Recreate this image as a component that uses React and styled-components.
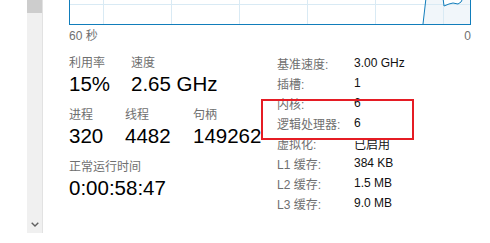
import React from "react";
import styled, { createGlobalStyle } from "styled-components";

const Global = createGlobalStyle`
  html, body { margin: 0; padding: 0; background: #fff; }
  body {
    font-family: "Liberation Sans", "Noto Sans CJK SC", sans-serif;
    overflow: hidden;
  }
`;

const Page = styled.div`
  display: flex;
  align-items: flex-start;
  width: 490px;
  height: 243px;
`;

const Scrollbar = styled.div`
  margin-left: 27px;
  width: 15px;
  height: 233px;
  background: #f0f0f0;
  border-right: 1px solid #e2e2e2;
  display: flex;
  flex-direction: column;
  justify-content: space-between;
  align-items: center;
`;

const Thumb = styled.div`
  width: 15px;
  height: 13px;
  background: #cdcdcd;
`;

const Arrow = styled.svg`
  margin-bottom: 6px;
  margin-left: 1px;
`;

const Main = styled.div`
  margin-left: 26px;
  width: 402px;
  display: flex;
  flex-direction: column;
`;

const Chart = styled.svg`
  display: block;
`;

const Axis = styled.div`
  margin-top: 3px;
  display: flex;
  justify-content: space-between;
  font-size: 12px;
  line-height: 16px;
  color: #707070;
`;

const Stats = styled.div`
  margin-top: 9px;
  display: grid;
  grid-template-columns: 208px auto;
`;

const LeftCol = styled.div`
  padding-top: 1px;
  display: flex;
  flex-direction: column;
  gap: 10px;
`;

const StatRow = styled.div`
  display: flex;
`;

const Stat = styled.div`
  width: ${(p) => p.$w || 100}px;
  display: flex;
  flex-direction: column;
  white-space: nowrap;
`;

const Label = styled.div`
  padding-top: 1px;
  font-size: 12px;
  line-height: 16px;
  color: #6f6f6f;
`;

const Value = styled.div`
  font-size: 20.5px;
  line-height: 25px;
  color: #000;
`;

const InfoTable = styled.div`
  position: relative;
  display: grid;
  grid-template-columns: 77px auto;
  grid-auto-rows: 20px;
  align-items: center;
  font-size: 12px;
  white-space: nowrap;
`;

const InfoKey = styled.div`
  color: #6f6f6f;
`;

const InfoVal = styled.div`
  color: #111;
`;

const Highlight = styled.div`
  position: absolute;
  left: -16px;
  top: 46px;
  width: 149px;
  height: 37px;
  border: 2px solid #e51c24;
`;

const info = [
  ["基准速度:", "3.00 GHz"],
  ["插槽:", "1"],
  ["内核:", "6"],
  ["逻辑处理器:", "6"],
  ["虚拟化:", "已启用"],
  ["L1 缓存:", "384 KB"],
  ["L2 缓存:", "1.5 MB"],
  ["L3 缓存:", "9.0 MB"],
];

const gridX = [34, 102, 170, 238, 306, 374];
const linePts = "354,24 357,-2 374,-2 375,6 380,4 384,3 389,4 392,2 394,-2 403,-2";

function CpuChart() {
  return (
    <Chart width="402" height="25" viewBox="0 0 402 25">
      <polygon points={`${linePts} 403,24`} fill="#f1f6fa" />
      {gridX.map((x) => (
        <line key={x} x1={x + 0.5} y1="0" x2={x + 0.5} y2="24" stroke="#d9eaf4" />
      ))}
      <line x1="0" y1="4.5" x2="402" y2="4.5" stroke="#d9eaf4" />
      <polyline points={linePts} fill="none" stroke="#117dbb" strokeWidth="1" />
      <line x1="0.5" y1="0" x2="0.5" y2="25" stroke="#117dbb" />
      <line x1="401.5" y1="0" x2="401.5" y2="25" stroke="#117dbb" />
      <line x1="0" y1="24.5" x2="402" y2="24.5" stroke="#117dbb" />
    </Chart>
  );
}

export default function App() {
  return (
    <>
      <Global />
      <Page>
        <Scrollbar>
          <Thumb />
          <Arrow width="8" height="5" viewBox="0 0 8 5">
            <path d="M0.7 0.7 L4 4 L7.3 0.7" fill="none" stroke="#606060" strokeWidth="1.4" />
          </Arrow>
        </Scrollbar>
        <Main>
          <CpuChart />
          <Axis>
            <span>60 秒</span>
            <span>0</span>
          </Axis>
          <Stats>
            <LeftCol>
              <StatRow>
                <Stat $w={62}>
                  <Label>利用率</Label>
                  <Value>15%</Value>
                </Stat>
                <Stat $w={120}>
                  <Label>速度</Label>
                  <Value>2.65 GHz</Value>
                </Stat>
              </StatRow>
              <StatRow>
                <Stat $w={56}>
                  <Label>进程</Label>
                  <Value>320</Value>
                </Stat>
                <Stat $w={68}>
                  <Label>线程</Label>
                  <Value>4482</Value>
                </Stat>
                <Stat $w={80}>
                  <Label>句柄</Label>
                  <Value>149262</Value>
                </Stat>
              </StatRow>
              <StatRow>
                <Stat $w={150}>
                  <Label>正常运行时间</Label>
                  <Value>0:00:58:47</Value>
                </Stat>
              </StatRow>
            </LeftCol>
            <InfoTable>
              {info.map(([k, v]) => (
                <React.Fragment key={k}>
                  <InfoKey>{k}</InfoKey>
                  <InfoVal>{v}</InfoVal>
                </React.Fragment>
              ))}
              <Highlight />
            </InfoTable>
          </Stats>
        </Main>
      </Page>
    </>
  );
}
